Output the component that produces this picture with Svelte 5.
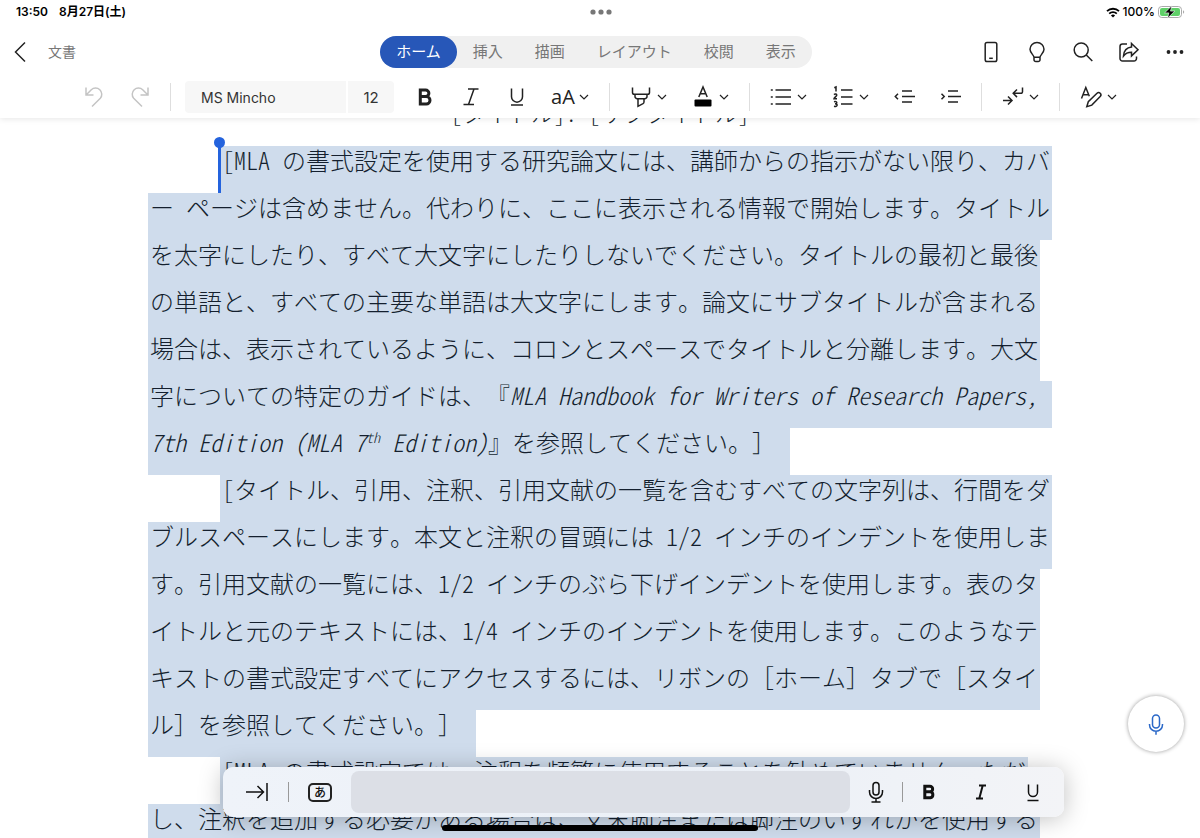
<script>
  let activeTab = "ホーム";
  let fontName = "MS Mincho";
  let fontSize = "12";

  const tabs = ["ホーム", "挿入", "描画", "レイアウト", "校閲", "表示"];

  // Text between * is italic, text after ^ up to the next ^ is superscript
  const paragraphs = [
    [
      "[MLA の書式設定を使用する研究論文には、講師からの指示がない限り、カバ",
      "ー ページは含めません。代わりに、ここに表示される情報で開始します。タイトル",
      "を太字にしたり、すべて大文字にしたりしないでください。タイトルの最初と最後",
      "の単語と、すべての主要な単語は大文字にします。論文にサブタイトルが含まれる",
      "場合は、表示されているように、コロンとスペースでタイトルと分離します。大文",
      "字についての特定のガイドは、『*MLA Handbook for Writers of Research Papers, *",
      "*7th Edition (MLA 7^th^ Edition)*』を参照してください。］ ",
    ],
    [
      "[タイトル、引用、注釈、引用文献の一覧を含むすべての文字列は、行間をダ",
      "ブルスペースにします。本文と注釈の冒頭には 1/2 インチのインデントを使用しま",
      "す。引用文献の一覧には、1/2 インチのぶら下げインデントを使用します。表のタ",
      "イトルと元のテキストには、1/4 インチのインデントを使用します。このようなテ",
      "キストの書式設定すべてにアクセスするには、リボンの［ホーム］タブで［スタイ",
      "ル］を参照してください。］ ",
    ],
    [
      "[MLA の書式設定では、注釈を頻繁に使用することを勧めていません。ただ",
      "し、注釈を追加する必要がある場合は、文末脚注または脚注のいずれかを使用する",
    ],
  ];

  // Splits a line into runs so that latin text can use half-width glyphs
  function toRuns(line) {
    const runs = [];
    let italic = false;
    let sup = false;

    line.split(/([*^])/).forEach((part) => {
      if (part === "*") {
        italic = !italic;
      } else if (part === "^") {
        sup = !sup;
      } else {
        part
          .split(/([\x20-\x7e]+)/)
          .filter((text) => text)
          .forEach((text) => {
            runs.push({ text, italic, sup, half: /^[\x20-\x7e]/.test(text) });
          });
      }
    });

    return runs;
  }
</script>

{#snippet chevron()}
  <svg class="chevron" viewBox="0 0 10 10"><path d="M1 3l4 4 4-4" /></svg>
{/snippet}

{#snippet mic()}
  <svg class="icon" viewBox="0 0 24 24">
    <rect x="8.5" y="3" width="7" height="13" rx="3.5" />
    <path d="M5.5 12v.8a6.500 6.500 0 0 0 13 0V12M12 19.300v3.500" />
  </svg>
{/snippet}

<div class="app">
  <header>
    <div class="status">
      <div class="clock"><span>13:50</span><span>8月27日(土)</span></div>
      <svg class="dots" viewBox="0 0 24 6">
        <circle cx="4" cy="3" r="2.6" /><circle cx="12" cy="3" r="2.6" /><circle cx="20" cy="3" r="2.6" />
      </svg>
      <div class="power">
        <svg class="wifi" viewBox="0 0 14 11">
          <path d="M1 4.2a8.6 8.6 0 0 1 12 0M3.2 6.6a5.4 5.4 0 0 1 7.6 0" />
          <path class="fill" d="M7 10.6L4.9 8.5a3 3 0 0 1 4.2 0z" />
        </svg>
        <span>100%</span>
        <svg class="battery" viewBox="0 0 27 14">
          <rect class="shell" x="0.5" y="1.5" width="23" height="11" rx="3.2" />
          <rect class="level" x="2" y="3" width="20" height="8" rx="2" />
          <path class="cap" d="M25 5.2c1.6.6 1.6 3 0 3.6z" />
          <path class="bolt" d="M13.8.8L6.6 7.9h4.2L9.6 13.2l7.2-7.1h-4.3z" />
        </svg>
      </div>
    </div>

    <div class="titlebar">
      <div class="left">
        <button class="back" aria-label="戻る">
          <svg class="icon" viewBox="0 0 24 24"><path d="M17 2.5L7.5 12l9.5 9.5" /></svg>
        </button>
        <span class="doc-name">文書</span>
      </div>

      <nav class="tabs">
        {#each tabs as tab}
          <button class:active={tab === activeTab} on:click={() => (activeTab = tab)}>{tab}</button>
        {/each}
      </nav>

      <div class="actions">
        <button class="tool" aria-label="モバイル表示">
          <svg class="icon" viewBox="0 0 24 24"><rect x="6.2" y="2.5" width="11.6" height="19" rx="1.8" /><path d="M10.2 18.3h3.6" /></svg>
        </button>
        <button class="tool" aria-label="ヒント">
          <svg class="icon" viewBox="0 0 24 24">
            <path d="M9 17.300c0-2.200-4-4.200-4-8a7 6.900 0 0 1 14 0c0 3.800-4 5.800-4 8zM9 17.300v2.400a1.800 1.800 0 0 0 1.800 1.800h2.400a1.800 1.800 0 0 0 1.800-1.800v-2.400" />
          </svg>
        </button>
        <button class="tool" aria-label="検索">
          <svg class="icon" viewBox="0 0 24 24"><circle cx="10.200" cy="10" r="7" /><path d="M15.300 15l6 6" /></svg>
        </button>
        <button class="tool" aria-label="共有">
          <svg class="icon" viewBox="0 0 24 24">
            <path d="M10 4H5.500A2.500 2.500 0 0 0 3 6.500v12A2.500 2.500 0 0 0 5.500 21h11.500a2.500 2.500 0 0 0 2.500-2.500V16.500" />
            <path d="M14.500 3.500l6.500 6.200-6.500 6.200v-3.600c-4 0-6 1-8 3.700.4-5 3-8.400 8-8.900z" />
          </svg>
        </button>
        <button class="tool" aria-label="その他">
          <svg class="icon solid" viewBox="0 0 24 24"><circle cx="5.500" cy="12" r="1.900" /><circle cx="12" cy="12" r="1.900" /><circle cx="18.500" cy="12" r="1.900" /></svg>
        </button>
      </div>
    </div>

    <div class="ribbon">
      <button class="tool" disabled aria-label="元に戻す">
        <svg class="icon" viewBox="0 0 24 24"><path d="M4 2.500v7.500h7.500M4.300 9.700l5-4.900a6.200 6.200 0 0 1 9 8.500L10 21.500" /></svg>
      </button>
      <button class="tool" disabled aria-label="やり直し">
        <svg class="icon" viewBox="0 0 24 24"><path d="M20 2.500v7.500h-7.500M19.700 9.700l-5-4.900a6.200 6.200 0 0 0-9 8.500L14 21.500" /></svg>
      </button>
      <span class="sep"></span>
      <div class="font-box">
        <select class="font-name" aria-label="フォント" bind:value={fontName}>
          <option>MS Mincho</option>
        </select>
        <input class="font-size" aria-label="フォント サイズ" bind:value={fontSize} />
      </div>
      <button class="tool" aria-label="太字">
        <svg class="icon bold" viewBox="0 0 24 24"><path d="M7.300 5v14h6a3.700 3.700 0 0 0 0-7.400H8h4.600a3.300 3.300 0 0 0 0-6.600z" /></svg>
      </button>
      <button class="tool" aria-label="斜体">
        <svg class="icon" viewBox="0 0 24 24"><path d="M9 4h10.500M4.500 19.500H15M15 4L9.500 19.500" /></svg>
      </button>
      <button class="tool" aria-label="下線">
        <svg class="icon" viewBox="0 0 24 24"><path d="M6.500 3.500v8.200a5.500 5.500 0 0 0 11 0V3.500M6 20h12" /></svg>
      </button>
      <button class="tool drop" aria-label="文字の書式"><span class="case">aA</span>{@render chevron()}</button>
      <span class="sep"></span>
      <button class="tool drop" aria-label="蛍光ペン">
        <svg class="icon" viewBox="0 0 24 24"><path d="M3.500 2.500v5a1.800 1.800 0 0 0 1.800 1.800h13.400a1.800 1.800 0 0 0 1.800-1.800v-5M6 9.300v2.200a2.200 2.200 0 0 0 2.200 2.200h7.600a2.200 2.200 0 0 0 2.200-2.200V9.300M9 13.700v7.600l5-2.600a2 2 0 0 0 1-1.800v-3.200" /></svg>
        {@render chevron()}
      </button>
      <button class="tool drop" aria-label="フォントの色">
        <svg class="icon" viewBox="0 0 24 24"><path d="M7.800 12L12 2l4.200 10M9.200 8.800h5.600" /><rect class="swatch" x="3.500" y="14.500" width="17" height="7" rx="1" /></svg>
        {@render chevron()}
      </button>
      <span class="sep"></span>
      <button class="tool drop" aria-label="箇条書き">
        <svg class="icon" viewBox="0 0 24 24"><path d="M6.500 5H22M6.500 12H22M6.500 19H22M1.800 5h2M1.800 12h2M1.800 19h2" /></svg>
        {@render chevron()}
      </button>
      <button class="tool drop" aria-label="段落番号">
        <svg class="icon" viewBox="0 0 24 24">
          <path d="M10 5h11.500M10 12h11.500M10 19h11.500" />
          <path d="M3.300 2.800l1.700-.8v4.600M3 9.600c1-1 3-.7 2.700.7C5.600 11.200 3.200 12.600 3 13.700h3M3 16.700c3.400-1 3.600 2 1 2.100 3.200 0 2.800 3.400-1 2.400" />
        </svg>
        {@render chevron()}
      </button>
      <button class="tool" aria-label="インデントを減らす">
        <svg class="icon" viewBox="0 0 24 24"><path d="M9 6h10M9 11.500h13M9 17h10M5 8.800L2.300 11.500 5 14.200" /></svg>
      </button>
      <button class="tool" aria-label="インデントを増やす">
        <svg class="icon" viewBox="0 0 24 24"><path d="M9 6h10M9 11.500h13M9 17h10M2.500 8.800l2.700 2.700-2.700 2.700" /></svg>
      </button>
      <span class="sep"></span>
      <button class="tool drop" aria-label="段落の方向">
        <svg class="icon" viewBox="0 0 24 24"><path d="M2 15.500h9M7 11.500l4 4-4 4M21.500 2.500v4.300a1.500 1.500 0 0 1-1.500 1.500h-7.500M16 4.500l-3.800 3.800 3.800 3.800" /></svg>
        {@render chevron()}
      </button>
      <span class="sep"></span>
      <button class="tool drop" aria-label="スタイル">
        <svg class="icon" viewBox="0 0 24 24"><path d="M2.500 13.500l4.300-11 3.500 8.800M4 9.800h5M18 8.300a2.200 2.200 0 0 1 3.200 3.200l-8.400 8.600-5 1.600 1.500-5z" /></svg>
        {@render chevron()}
      </button>
    </div>
  </header>

  <main>
    <div class="page">
      <h1>
        {#each toRuns("[タイトル]: [サブタイトル]") as run}<span class:half={run.half}>{run.text}</span>{/each}
      </h1>
      {#each paragraphs as lines, p}
        <p class:caret={p === 0}>
          {#each lines as line}
            <span class="line">{#each toRuns(line) as run}{#if run.sup}<sup class="half italic">{run.text}</sup>{:else}<span class:half={run.half} class:italic={run.italic}>{run.text}</span>{/if}{/each}</span>
          {/each}
        </p>
      {/each}
    </div>
  </main>

  <button class="dictate" aria-label="ディクテーション">{@render mic()}</button>

  <div class="keybar">
    <button class="key wide" aria-label="タブ">
      <svg class="icon" viewBox="0 0 24 24"><path d="M1 12h17.500M12.500 6l6 6-6 6M22 3v18" /></svg>
    </button>
    <span class="sep"></span>
    <button class="key wide"><span class="kana">あ</span></button>
    <div class="suggestions"></div>
    <button class="key" aria-label="音声入力">
      <svg class="icon" viewBox="0 0 24 24">
        <rect x="9" y="2.500" width="6" height="12.500" rx="3" />
        <path d="M5.500 10v2a6.500 6.500 0 0 0 13 0v-2M12 18.500V22M7.500 22h9" />
      </svg>
    </button>
    <span class="sep"></span>
    <button class="key" aria-label="太字">
      <svg class="icon heavy" viewBox="0 0 24 24"><path d="M7.800 6.300v11.400h5.600a3 3 0 0 0 0-5.900H8.500h4.400a2.700 2.700 0 0 0 0-5.500z" /></svg>
    </button>
    <button class="key" aria-label="斜体">
      <svg class="icon thick" viewBox="0 0 24 24"><path d="M10 5.500h7M7 18.500h7M13.700 5.500l-3.400 13" /></svg>
    </button>
    <button class="key" aria-label="下線">
      <svg class="icon" viewBox="0 0 24 24"><path d="M7.500 4.500v7.500a4.500 4.500 0 0 0 9 0V4.500M6.500 20.500h11" /></svg>
    </button>
  </div>
  <div class="home"></div>
</div>

<style>
  :global(body) {
    background: #fff;
  }

  .app {
    position: relative;
    display: flex;
    flex-direction: column;
    height: 100vh;
    overflow: hidden;
    font-family: Inter, "Noto Sans CJK JP", sans-serif;
    color: #222;
  }

  header {
    position: relative;
    z-index: 1;
    background: #fff;
    box-shadow: 0 1px 6px rgba(0, 0, 0, 0.1);
  }

  button {
    display: flex;
    align-items: center;
    justify-content: center;
    padding: 0;
    border: 0;
    background: none;
    color: inherit;
    font: inherit;
  }

  .icon {
    width: 24px;
    height: 24px;
    fill: none;
    stroke: currentColor;
    stroke-width: 1.5;
  }

  .icon.solid {
    fill: currentColor;
    stroke: none;
  }

  .icon.bold {
    stroke-width: 3;
  }

  .icon.heavy {
    stroke-width: 3;
  }

  .icon.thick {
    stroke-width: 2;
  }

  .icon .swatch {
    fill: #000;
    stroke: none;
  }

  .chevron {
    width: 10px;
    height: 10px;
    fill: none;
    stroke: currentColor;
    stroke-width: 1.2;
  }

  .status {
    display: grid;
    grid-template-columns: 1fr auto 1fr;
    align-items: center;
    height: 24px;
    padding: 0 15px 0 16px;
    font-size: 12px;
    font-weight: 600;
    line-height: 16px;
    color: #000;
  }

  .clock {
    display: flex;
    align-items: baseline;
    gap: 11px;
  }

  .dots {
    width: 24px;
    height: 6px;
    fill: #777;
  }

  .power {
    display: flex;
    align-items: center;
    justify-content: flex-end;
    gap: 3px;
    font-weight: 500;
  }

  .wifi {
    width: 14px;
    height: 11px;
    fill: none;
    stroke: #000;
    stroke-width: 1.8;
  }

  .wifi .fill {
    fill: #000;
    stroke: none;
  }

  .battery {
    width: 27px;
    height: 14px;
  }

  .shell {
    fill: #fff;
    stroke: #aaa;
  }

  .level {
    fill: #5fd068;
  }

  .cap {
    fill: #aaa;
  }

  .bolt {
    fill: #000;
    stroke: #fff;
    stroke-width: 0.6;
  }

  .titlebar {
    display: grid;
    grid-template-columns: 1fr auto 1fr;
    align-items: center;
    height: 56px;
  }

  .left {
    display: flex;
    align-items: center;
    gap: 16px;
    padding-left: 8px;
  }

  .doc-name {
    font-size: 14px;
    line-height: 20px;
    color: #777;
  }

  .tabs {
    display: flex;
    margin-right: 8px;
    border-radius: 16px;
    background: #f0f0f0;
  }

  .tabs button {
    height: 32px;
    padding: 0 16px;
    border-radius: 16px;
    font-size: 15px;
    line-height: 20px;
    color: #777;
  }

  .tabs button.active {
    background: #2757b8;
    color: #fff;
  }

  .actions {
    display: flex;
    justify-content: flex-end;
    padding-right: 2px;
  }

  .tool {
    width: 46px;
    height: 32px;
  }

  .tool:disabled {
    color: #c4c4c4;
  }

  .drop {
    justify-content: flex-start;
    gap: 4px;
    width: 62px;
    padding-left: 11px;
  }

  .case {
    width: 24px;
    font-family: "Open Sans", sans-serif;
    font-size: 20px;
    line-height: 24px;
  }

  .ribbon {
    display: flex;
    align-items: center;
    height: 34px;
    padding: 0 0 4px 71px;
  }

  .sep {
    width: 1px;
    height: 28px;
    margin: 0 8px 0 7px;
    background: #dedede;
  }

  .font-box {
    display: flex;
    gap: 2px;
    margin: 0 8px 0 6px;
  }

  .font-name,
  .font-size {
    box-sizing: border-box;
    height: 32px;
    border: 0;
    background: #f7f7f7;
    color: #333;
    font-family: Inter, sans-serif;
  }

  .font-name {
    width: 161px;
    padding: 0 16px;
    border-radius: 4px 0 0 4px;
    appearance: none;
    font-size: 14px;
  }

  .font-size {
    width: 46px;
    padding: 0;
    border-radius: 0 4px 4px 0;
    font-size: 15px;
    text-align: center;
  }

  main {
    flex: 1;
    min-height: 0;
    margin-top: -19px;
    overflow: hidden;
  }

  .page {
    width: 904px;
    max-width: 100%;
    margin: 0 auto;
    color: #141f2e;
    font-family: "Noto Sans CJK JP", sans-serif;
    font-size: 24px;
    font-weight: 300;
    font-kerning: none;
    line-height: 27px;
    text-spacing-trim: space-all;
  }

  h1 {
    margin: 0;
    padding-bottom: 20px;
    font-size: 23px;
    font-weight: 300;
    text-align: center;
    white-space: pre;
  }

  p {
    position: relative;
    margin: 0;
  }

  .line {
    display: block;
    width: fit-content;
    padding: 0 2px 20px;
    background: #cfdcec;
    white-space: pre;
  }

  .line:first-child {
    margin-left: 72px;
  }

  .half {
    font-feature-settings: "hwid";
  }

  .italic {
    font-style: italic;
  }

  sup {
    font-size: 14px;
    line-height: 0;
    vertical-align: 9px;
  }

  .caret::before,
  .caret::after {
    content: "";
    position: absolute;
    background: #2463dd;
  }

  .caret::before {
    top: 0;
    left: 70px;
    width: 3px;
    height: 47px;
  }

  .caret::after {
    top: -9px;
    left: 66px;
    width: 11px;
    height: 11px;
    border-radius: 50%;
  }

  .dictate {
    position: absolute;
    right: 16px;
    bottom: 86px;
    width: 56px;
    height: 56px;
    border-radius: 50%;
    background: #fff;
    box-shadow: 0 0 4px rgba(0, 0, 0, 0.4);
    color: #2a68c8;
  }

  .keybar {
    position: absolute;
    right: 136px;
    bottom: 21px;
    left: 223px;
    display: flex;
    align-items: center;
    box-sizing: border-box;
    height: 50px;
    padding: 0 5px 0 3px;
    border-radius: 10px;
    background: linear-gradient(90deg, #eff3f9, #ebf0f7 60%, #f3f4f7);
    box-shadow: 0 2px 24px rgba(0, 0, 0, 0.25);
    color: #111;
  }

  .key {
    width: 52px;
    height: 40px;
  }

  .key.wide {
    width: 62px;
  }

  .keybar .sep {
    height: 20px;
    margin: 0;
    background: #999;
  }

  .kana {
    width: 20px;
    border: 2px solid #222;
    border-radius: 5px;
    font-size: 12px;
    font-weight: 500;
    line-height: 15px;
  }

  .suggestions {
    flex: 1;
    height: 42px;
    border-radius: 8px;
    background: #dcdfe6;
  }

  .home {
    position: absolute;
    bottom: 7px;
    left: 50%;
    width: 316px;
    height: 6px;
    margin-left: -158px;
    border-radius: 3px;
    background: #000;
  }
</style>
